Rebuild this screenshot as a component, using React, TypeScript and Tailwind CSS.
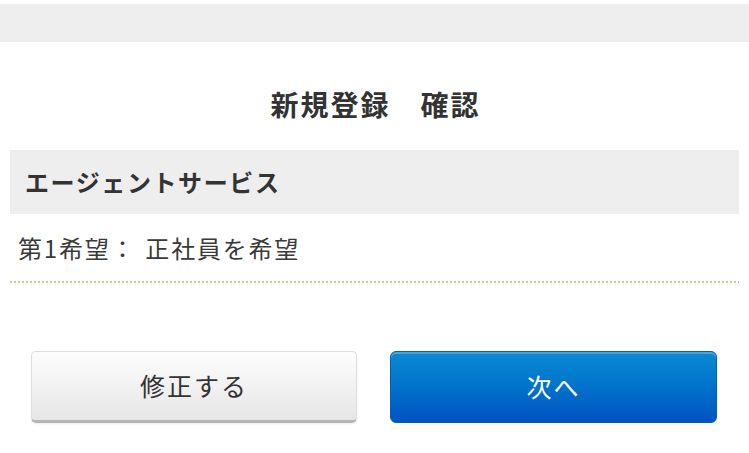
export default function App() {
  return (
    <div
      className="w-[749px] h-[453px] bg-white pt-[4px] text-[#333333]"
      style={{ fontFamily: '"Noto Sans CJK JP", "Noto Sans", sans-serif' }}
    >
      <div className="h-[38px] bg-[#eeeeee]" />
      <div className="h-[108px] pt-[16px] flex items-center justify-center">
        <h1 className="text-[28px] font-bold leading-none tracking-[2px] pl-[2px]">新規登録　確認</h1>
      </div>
      <div className="mx-[10px] h-[64px] bg-[#eeeeee] flex items-center px-[15px]">
        <h2 className="text-[24px] font-bold leading-none tracking-[1.6px]">エージェントサービス</h2>
      </div>
      <div className="mx-[10px]">
        <div className="h-[67px] flex items-center px-[8px] text-[24px] leading-none tracking-[1.8px] text-[#3a3a3a]">
          <span>第1希望：</span>
          <span className="ml-[9px]">正社員を希望</span>
        </div>
        <div className="h-[2px] bg-[linear-gradient(to_right,#cbc7a3_50%,transparent_50%)] bg-[length:4px_2px]" />
      </div>
      <div className="mt-[68px] px-[31px] flex gap-[33px]">
        <button className="w-[326px] h-[72px] rounded-[5px] border border-[#dedede] border-b-[3px] border-b-[#b5b5b5] bg-[linear-gradient(to_bottom,#fdfdfd,#e6e6e6)] text-[25px] tracking-[2px] text-[#333333] flex items-center justify-center shadow-[0_1px_2px_rgba(0,0,0,0.08)]">
          修正する
        </button>
        <button className="w-[327px] h-[72px] rounded-[6px] border border-[#0560b0] bg-[linear-gradient(to_bottom,#0a8ad0,#0278cc_40%,#0052c2)] shadow-[inset_0_2px_0_rgba(255,255,255,0.25)] text-[25px] tracking-[2px] text-white flex items-center justify-center">
          次へ
        </button>
      </div>
    </div>
  );
}
